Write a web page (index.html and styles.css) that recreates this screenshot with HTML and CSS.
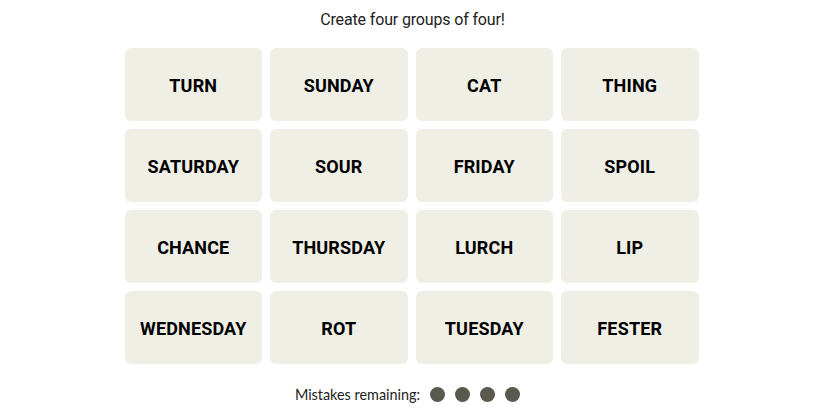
FILE: index.html
```html
<!DOCTYPE html>
<html>
<head>
<meta charset="utf-8">
<link rel="stylesheet" href="styles.css">
</head>
<body>
<main class="game">
  <p class="prompt">Create four groups of four!</p>
  <div class="board">
    <div class="tile">TURN</div>
    <div class="tile">SUNDAY</div>
    <div class="tile">CAT</div>
    <div class="tile">THING</div>
    <div class="tile">SATURDAY</div>
    <div class="tile">SOUR</div>
    <div class="tile">FRIDAY</div>
    <div class="tile">SPOIL</div>
    <div class="tile">CHANCE</div>
    <div class="tile">THURSDAY</div>
    <div class="tile">LURCH</div>
    <div class="tile">LIP</div>
    <div class="tile">WEDNESDAY</div>
    <div class="tile">ROT</div>
    <div class="tile">TUESDAY</div>
    <div class="tile">FESTER</div>
  </div>
  <div class="mistakes">
    <span class="mistakes-label">Mistakes remaining:</span>
    <span class="dots">
      <span class="dot"></span><span class="dot"></span><span class="dot"></span><span class="dot"></span>
    </span>
  </div>
</main>
</body>
</html>
```
FILE: styles.css
```css
html, body {
  margin: 0;
  padding: 0;
  background: #ffffff;
}
.game {
  width: 825px;
  display: flex;
  flex-direction: column;
  align-items: center;
  font-family: "Roboto", "Liberation Sans", sans-serif;
  color: #121212;
}
.prompt {
  margin: 10px 0 0 0;
  font-size: 16px;
  line-height: 20px;
  color: #222;
  letter-spacing: -0.15px;
}
.board {
  margin: 18px 0 0 -2px;
  display: grid;
  grid-template-columns: repeat(4, 137.5px);
  grid-auto-rows: 73px;
  gap: 8px;
}
.tile {
  background: #efefe6;
  border-radius: 6px;
  display: flex;
  align-items: center;
  justify-content: center;
  padding-top: 2px;
  font-weight: 700;
  font-size: 18px;
  letter-spacing: 0.15px;
  color: #000;
}
.mistakes {
  margin: 22px 0 0 -10px;
  display: flex;
  align-items: center;
  gap: 10px;
  font-family: "Lato", "Liberation Sans", sans-serif;
  font-size: 14.4px;
  color: #222;
}
.dots {
  display: flex;
  gap: 10px;
}
.dot {
  width: 15px;
  height: 15px;
  border-radius: 50%;
  background: #5a594e;
}
```
